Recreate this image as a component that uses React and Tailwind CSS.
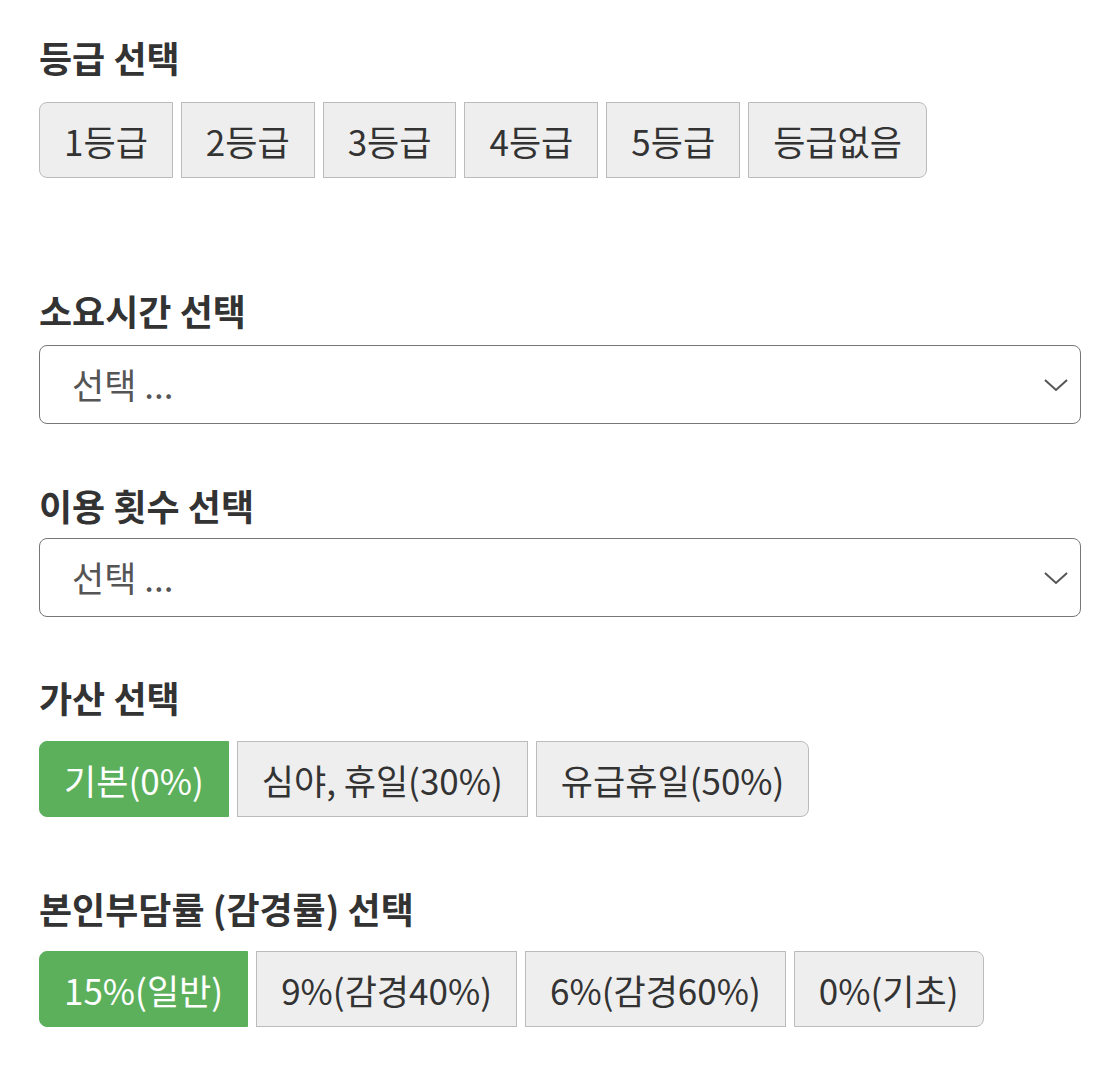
import { useState } from 'react';

const FONT = "font-['Noto_Sans_CJK_KR','Noto_Sans',sans-serif]";

const grades = ['1등급', '2등급', '3등급', '4등급', '5등급', '등급없음'];
const extras = ['기본(0%)', '심야, 휴일(30%)', '유급휴일(50%)'];
const rates = ['15%(일반)', '9%(감경40%)', '6%(감경60%)', '0%(기초)'];

const ButtonGroup = ({ items, selected, onSelect }) => (
  <div className="flex gap-2">
    {items.map((label, i) => {
      const active = selected === i;
      return (
        <button
          key={label}
          type="button"
          onClick={() => onSelect(i)}
          className={
            'h-[76px] px-6 text-[35px] leading-none border ' +
            (i === 0 ? 'rounded-l-lg ' : '') +
            (i === items.length - 1 ? 'rounded-r-lg ' : '') +
            (active
              ? 'bg-[#5cb05c] border-[#5cb05c] text-white'
              : 'bg-[#eeeeee] border-[#bbbbbb] text-[#333333]')
          }
        >
          {label}
        </button>
      );
    })}
  </div>
);

const Select = () => (
  <div className="relative">
    <select
      defaultValue=""
      className="w-full h-[79px] appearance-none rounded-lg border border-[#777777] bg-white pl-8 pr-16 text-[35px] text-[#555555] outline-none"
    >
      <option value="">선택 ...</option>
    </select>
    <svg
      className="absolute right-[12px] top-1/2 -translate-y-1/2 pointer-events-none"
      width="26"
      height="16"
      viewBox="0 0 26 16"
      fill="none"
    >
      <polyline points="2,3 13,13 24,3" stroke="#555555" strokeWidth="2" />
    </svg>
  </div>
);

const Heading = ({ children, className = '' }) => (
  <h2 className={'text-[36px] font-bold leading-[48px] text-[#333333] ' + className}>{children}</h2>
);

export default function App() {
  const [grade, setGrade] = useState(-1);
  const [extra, setExtra] = useState(0);
  const [rate, setRate] = useState(0);

  return (
    <div className={FONT + ' bg-white min-h-[1086px] px-[39px] pt-[33px] w-[1120px] max-w-full'}>
      <div className="w-[1042px]">
        <Heading>등급 선택</Heading>
        <div className="mt-[21px]">
          <ButtonGroup items={grades} selected={grade} onSelect={setGrade} />
        </div>

        <Heading className="mt-[108px]">소요시간 선택</Heading>
        <div className="mt-[11px]">
          <Select />
        </div>

        <Heading className="mt-[57px]">이용 횟수 선택</Heading>
        <div className="mt-[9px]">
          <Select />
        </div>

        <Heading className="mt-[56px]">가산 선택</Heading>
        <div className="mt-5">
          <ButtonGroup items={extras} selected={extra} onSelect={setExtra} />
        </div>

        <Heading className="mt-[67px]">본인부담률 (감경률) 선택</Heading>
        <div className="mt-[19px]">
          <ButtonGroup items={rates} selected={rate} onSelect={setRate} />
        </div>
      </div>
    </div>
  );
}
